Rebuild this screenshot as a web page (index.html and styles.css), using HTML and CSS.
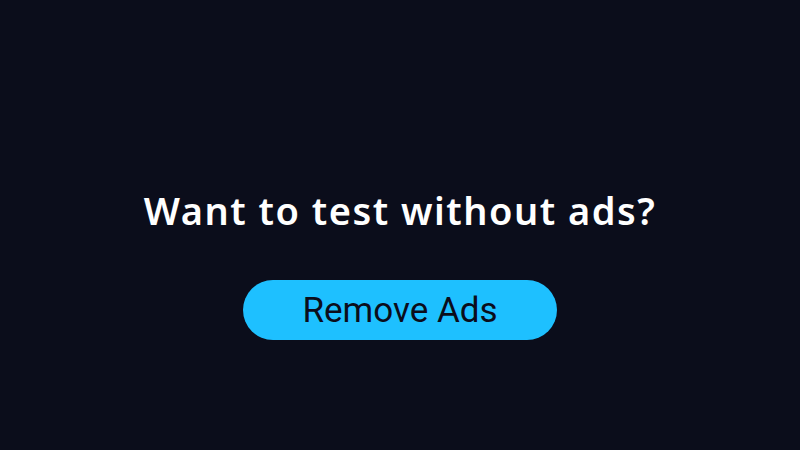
FILE: index.html
```html
<!DOCTYPE html>
<html>
<head>
<meta charset="utf-8">
<link rel="stylesheet" href="styles.css">
</head>
<body>
<main class="screen">
  <h1 class="title">Want to test without ads?</h1>
  <button class="remove-btn">Remove Ads</button>
</main>
</body>
</html>
```
FILE: styles.css
```css
html, body {
  margin: 0;
  padding: 0;
  background: #0b0d1b;
}
.screen {
  width: 800px;
  height: 450px;
  display: flex;
  flex-direction: column;
  align-items: center;
  padding-top: 185px;
  box-sizing: border-box;
}
.title {
  margin: 0;
  font-family: "Noto Sans", sans-serif;
  font-weight: 600;
  font-size: 38px;
  line-height: 50px;
  color: #ffffff;
  letter-spacing: 1.5px;
}
.remove-btn {
  margin-top: 45px;
  width: 314px;
  height: 60px;
  border: none;
  border-radius: 30px;
  background: #1ec0ff;
  color: #0b0d1b;
  font-family: Roboto, sans-serif;
  font-size: 35px;
  font-weight: 400;
  padding: 0;
}
```
